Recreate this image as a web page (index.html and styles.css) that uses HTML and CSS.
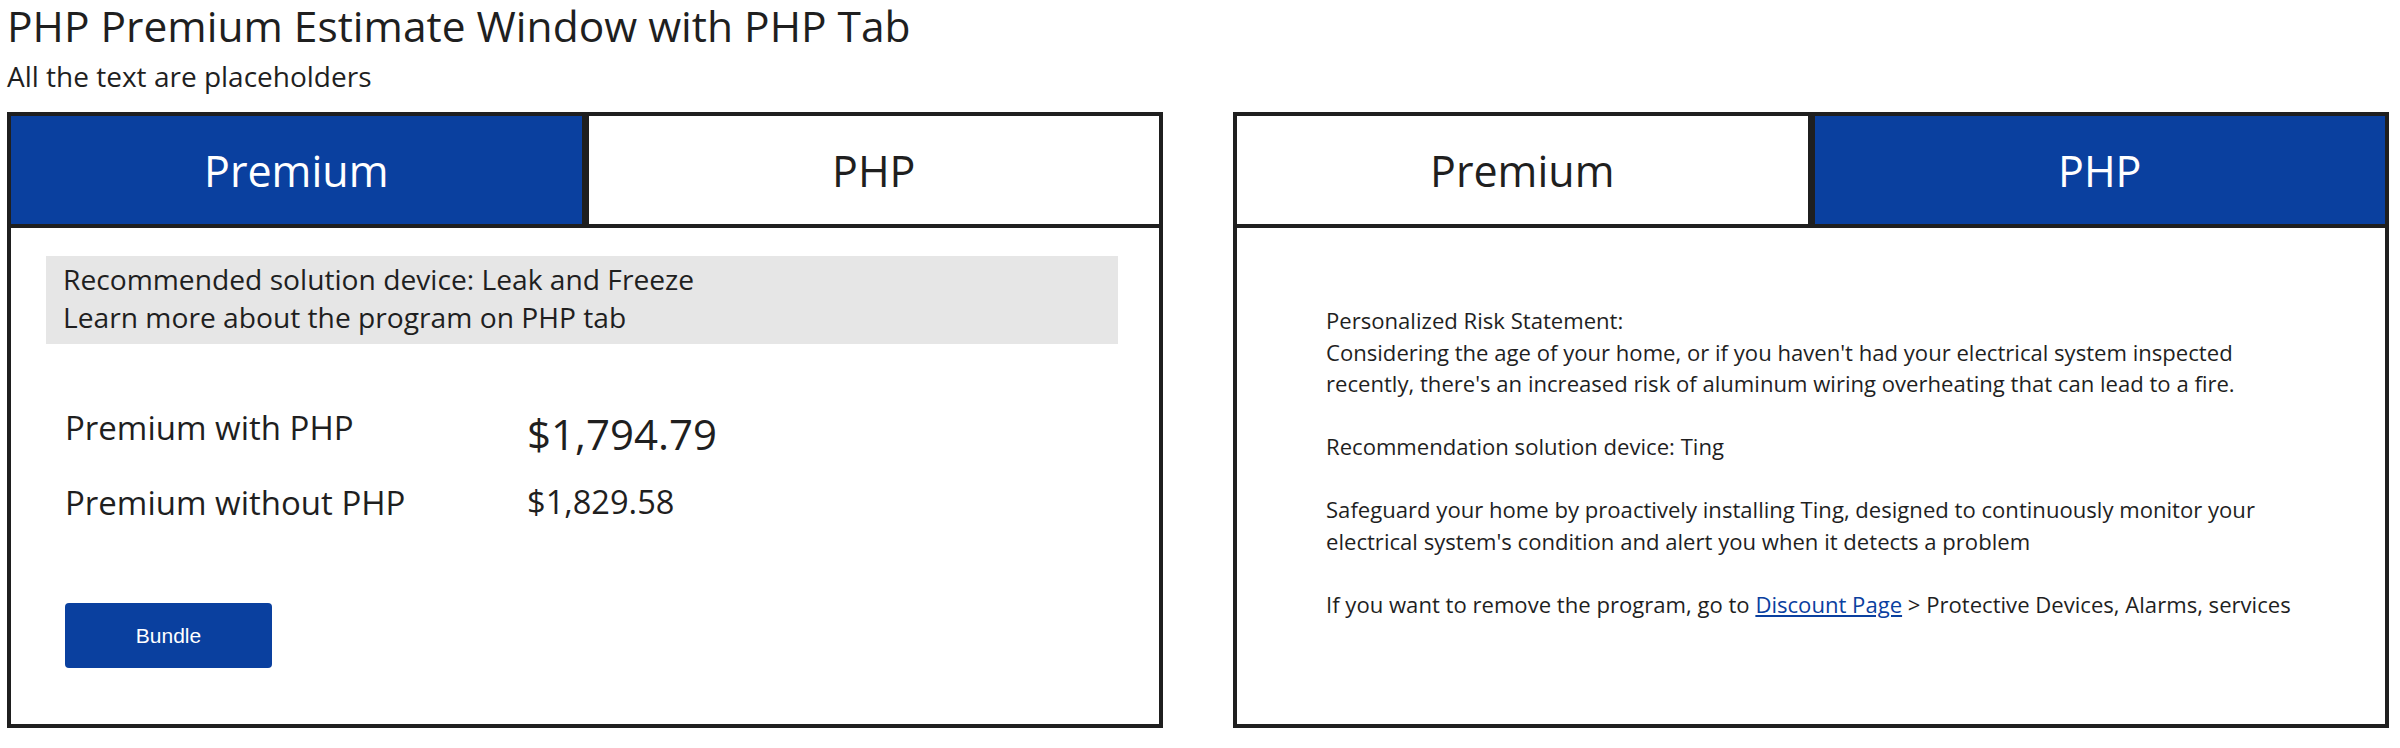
FILE: index.html
```html
<!DOCTYPE html>
<html lang="en">
<head>
<meta charset="utf-8">
<title>PHP Premium Estimate Window with PHP Tab</title>
<link rel="stylesheet" href="styles.css">
</head>
<body>
<div class="page">
  <h1 class="title">PHP Premium Estimate Window with PHP Tab</h1>
  <p class="subtitle">All the text are placeholders</p>
  <div class="panels">
    <section class="panel">
      <div class="tabs">
        <div class="tab tab-active">Premium</div>
        <div class="tab">PHP</div>
      </div>
      <div class="panel-body premium-body">
        <div class="note">
          <div>Recommended solution device: Leak and Freeze</div>
          <div>Learn more about the program on PHP tab</div>
        </div>
        <div class="rows">
          <div class="row-label">Premium with PHP</div>
          <div class="price price-big">$1,794.79</div>
          <div class="row-label">Premium without PHP</div>
          <div class="price">$1,829.58</div>
        </div>
        <button class="bundle" type="button">Bundle</button>
      </div>
    </section>
    <section class="panel">
      <div class="tabs">
        <div class="tab">Premium</div>
        <div class="tab tab-active">PHP</div>
      </div>
      <div class="panel-body php-body">
        <p class="para">Personalized Risk Statement:<br>Considering the age of your home, or if you haven't had your electrical system inspected<br>recently, there's an increased risk of aluminum wiring overheating that can lead to a fire.</p>
        <p class="para">Recommendation solution device: Ting</p>
        <p class="para">Safeguard your home by proactively installing Ting, designed to continuously monitor your<br>electrical system's condition and alert you when it detects a problem</p>
        <p class="para">If you want to remove the program, go to <a class="link" href="#">Discount Page</a> &gt; Protective Devices, Alarms, services</p>
      </div>
    </section>
  </div>
</div>
</body>
</html>
```
FILE: styles.css
```css
html, body {
  margin: 0;
  background: #ffffff;
}

body {
  font-family: "Open Sans", "Liberation Sans", sans-serif;
  color: #1f1f1f;
}

.page {
  padding: 2px 11px 0 7px;
}

.title {
  margin: 0;
  font-size: 42.5px;
  line-height: 48px;
  font-weight: 400;
}

.subtitle {
  margin: 8px 0 0 0;
  font-size: 28px;
  line-height: 36px;
}

.panels {
  display: flex;
  gap: 70px;
  margin-top: 18px;
}

.panel {
  width: 1156px;
  height: 616px;
  box-sizing: border-box;
  border: 4px solid #1f1f1f;
  display: flex;
  flex-direction: column;
  background: #ffffff;
}

.tabs {
  display: flex;
  height: 112px;
  box-sizing: border-box;
  border-bottom: 4px solid #1f1f1f;
}

.tab {
  flex: 1;
  display: flex;
  align-items: center;
  justify-content: center;
  font-size: 43px;
  color: #1f1f1f;
  background: #ffffff;
}

.tab + .tab {
  border-left: 7px solid #1f1f1f;
}

.tab-active {
  background: #0a409f;
  color: #ffffff;
}

.panel-body {
  flex: 1;
}

.premium-body {
  padding: 28px 41px 0 35px;
}

.note {
  background: #e6e6e6;
  padding: 4px 17px 8px 17px;
  font-size: 28.2px;
  line-height: 38px;
}

.rows {
  margin-top: 61px;
  padding-left: 19px;
  display: grid;
  grid-template-columns: 462px auto;
  row-gap: 18px;
  align-items: start;
}

.row-label {
  font-size: 33px;
  line-height: 45px;
}

.price {
  font-size: 32.6px;
  line-height: 44px;
}

.price-big {
  font-size: 42px;
  line-height: 57px;
}

.bundle {
  display: block;
  margin: 78px 0 0 19px;
  width: 207px;
  height: 65px;
  border: none;
  border-radius: 4px;
  background: #0a409f;
  color: #ffffff;
  font-family: "Liberation Sans", Arial, sans-serif;
  font-size: 21px;
  padding: 0;
}

.php-body {
  padding: 77px 40px 0 89px;
  font-size: 22.1px;
  line-height: 31.5px;
}

.para {
  margin: 0 0 31.5px 0;
}

.link {
  color: #0a409f;
  text-decoration: underline;
}
```
